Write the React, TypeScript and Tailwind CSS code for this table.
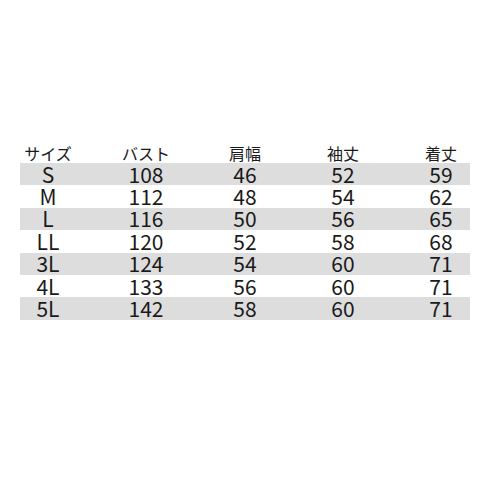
import React from "react";

const rows = [
  ["S", "108", "46", "52", "59"],
  ["M", "112", "48", "54", "62"],
  ["L", "116", "50", "56", "65"],
  ["LL", "120", "52", "58", "68"],
  ["3L", "124", "54", "60", "71"],
  ["4L", "133", "56", "60", "71"],
  ["5L", "142", "58", "60", "71"],
];

const font = { fontFamily: '"Noto Sans CJK JP", "Noto Sans", sans-serif' };

export default function App() {
  return (
    <div className="w-[490px] h-[490px] bg-white text-[#1a1a1a] px-[20px] pt-[141px]" style={font}>
      <div className="grid grid-cols-[56px_140px_58px_138px_58px] h-[22px] items-center text-[16px] leading-[18px]">
        <div className="flex justify-center whitespace-nowrap pt-[2px]">サイズ</div>
        <div className="flex justify-center whitespace-nowrap pt-[2px]">バスト</div>
        <div className="flex justify-center whitespace-nowrap pt-[2px]">肩幅</div>
        <div className="flex justify-center whitespace-nowrap pt-[2px]">袖丈</div>
        <div className="flex justify-center whitespace-nowrap pt-[2px]">着丈</div>
      </div>
      {rows.map((r, i) => (
        <div
          key={r[0]}
          className={
            "grid grid-cols-[56px_140px_58px_138px_58px] h-[22.4px] items-center text-[21px] leading-[21px] " +
            (i % 2 === 0 ? "bg-[#dddddd]" : "bg-white")
          }
        >
          {r.map((c, j) => (
            <div key={j} className="flex justify-center whitespace-nowrap">
              {c}
            </div>
          ))}
        </div>
      ))}
    </div>
  );
}
